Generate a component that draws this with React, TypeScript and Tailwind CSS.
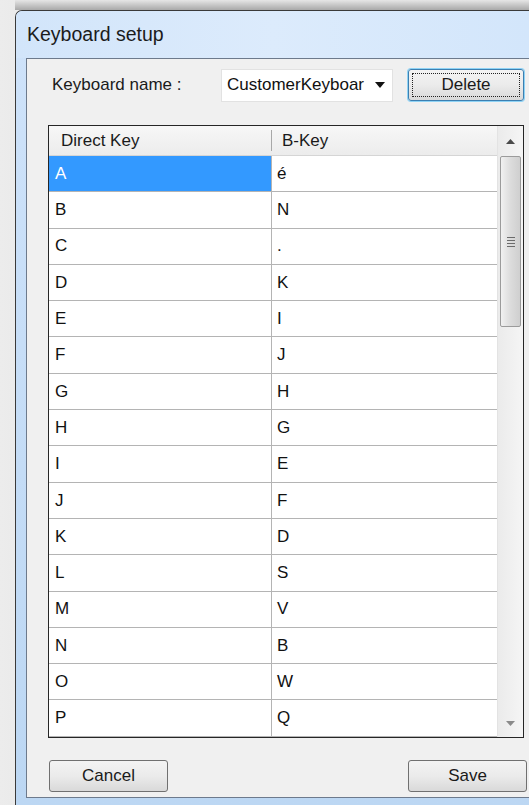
import React from "react";

const rows: [string, string][] = [
  ["A", "é"],
  ["B", "N"],
  ["C", "."],
  ["D", "K"],
  ["E", "I"],
  ["F", "J"],
  ["G", "H"],
  ["H", "G"],
  ["I", "E"],
  ["J", "F"],
  ["K", "D"],
  ["L", "S"],
  ["M", "V"],
  ["N", "B"],
  ["O", "W"],
  ["P", "Q"],
];

const ui = { fontFamily: '"Liberation Sans", Arial, sans-serif' };

function ScrollBar() {
  return (
    <div className="w-[26px] flex flex-col bg-gradient-to-r from-[#ebebeb] to-[#f5f5f5] border-l border-[#e3e3e3]">
      <div className="h-[30px] flex items-center justify-center">
        <svg width="9" height="5" viewBox="0 0 9 5">
          <path d="M0 5 L4.5 0 L9 5 Z" fill="#4a4a4a" />
        </svg>
      </div>
      <div className="mx-[2px] h-[171px] rounded-[2px] border border-[#9b9b9b] bg-gradient-to-r from-[#f1f1f1] via-[#dcdcdc] to-[#cfcfcf] flex items-center justify-center">
        <div className="flex flex-col gap-[2px]">
          <div className="w-[8px] h-[1px] bg-[#6b6b6b]" />
          <div className="w-[8px] h-[1px] bg-[#6b6b6b]" />
          <div className="w-[8px] h-[1px] bg-[#6b6b6b]" />
          <div className="w-[8px] h-[1px] bg-[#6b6b6b]" />
        </div>
      </div>
      <div className="flex-1" />
      <div className="h-[28px] flex items-center justify-center">
        <svg width="9" height="5" viewBox="0 0 9 5">
          <path d="M0 0 L4.5 5 L9 0 Z" fill="#8a8a8a" />
        </svg>
      </div>
    </div>
  );
}

function Button({ label, focused }: { label: string; focused?: boolean }) {
  return (
    <div
      className={
        "h-[32px] rounded-[3px] border flex items-center justify-center text-[17px] text-[#1a1a1a] bg-gradient-to-b from-[#f3f3f3] via-[#ebebeb] to-[#d9d9d9] " +
        (focused
          ? "border-[#3c7fb1] shadow-[0_0_0_1px_#8fd3f5]"
          : "border-[#707070]")
      }
    >
      {focused ? (
        <div className="m-[3px] self-stretch flex-1 border border-dotted border-[#222] flex items-center justify-center">
          {label}
        </div>
      ) : (
        label
      )}
    </div>
  );
}

export default function App() {
  return (
    <div
      className="w-[529px] h-[805px] overflow-hidden flex flex-col bg-gradient-to-r from-[#ececec] to-[#c4c4c4]"
      style={ui}
    >
      {/* shadow above the window */}
      <div className="h-[10px] bg-gradient-to-b from-[#e6e6e6] to-[#a9a9a9] ml-[15px]" />
      <div className="flex-1 flex pl-[15px] min-h-0">
        <div className="flex-1 flex flex-col rounded-tl-[7px] border-l border-t border-[#3a3a3a] bg-gradient-to-b from-[#cfe3fa] to-[#bcd7f3] overflow-hidden">
          {/* title bar */}
          <div className="h-[47px] flex items-center pl-[11px] text-[19.5px] text-[#1b1b1b] bg-gradient-to-r from-[#d2e5fa] via-[#dcebfc] to-[#d3e6fb]">
            Keyboard setup
          </div>
          {/* client area */}
          <div className="flex-1 ml-[10px] mb-[7px] border-l border-t border-b border-[#6d7a8c] bg-[#f0f0f0] flex flex-col">
            <div className="flex items-center pt-[9px] h-[43px]">
              <div className="pl-[25px] w-[194px] text-[17px] text-[#1a1a1a]">Keyboard name :</div>
              <div className="w-[172px] h-[33px] bg-white border border-[#e2e2e2] flex items-center pl-[5px] pr-[7px] text-[17px] text-[#111]">
                <span className="flex-1 overflow-hidden whitespace-nowrap">CustomerKeyboar</span>
                <svg width="10" height="6" viewBox="0 0 10 6" className="ml-[6px]">
                  <path d="M0 0 L10 0 L5 6 Z" fill="#111" />
                </svg>
              </div>
              <div className="ml-[15px] w-[116px]">
                <Button label="Delete" focused />
              </div>
            </div>

            {/* key grid */}
            <div className="ml-[21px] mt-[23px] w-[476px] h-[613px] border border-[#262626] bg-white flex">
              <div className="flex-1 flex flex-col">
                <div className="h-[30px] flex text-[17px] text-[#1a1a1a] bg-gradient-to-b from-[#f7f7f7] to-[#ececec] border-b border-[#d5d5d5]">
                  <div className="w-[223px] flex items-center pl-[12px] border-r border-[#a8a8a8] my-[4px]">Direct Key</div>
                  <div className="flex-1 flex items-center pl-[10px]">B-Key</div>
                </div>
                {rows.map(([a, b], i) => (
                  <div key={a} className="h-[36.3px] flex text-[17px] text-[#111] border-b border-[#b4b4b4]">
                    <div
                      className={
                        "w-[223px] flex items-center pl-[6px] border-r border-[#b4b4b4] " +
                        (i === 0 ? "bg-[#3399ff] text-white" : "")
                      }
                    >
                      {a}
                    </div>
                    <div className="flex-1 flex items-center pl-[5px]">{b}</div>
                  </div>
                ))}
              </div>
              <ScrollBar />
            </div>

            {/* bottom buttons */}
            <div className="flex justify-between mt-[22px] pl-[22px] pr-[2px]">
              <div className="w-[119px]">
                <Button label="Cancel" />
              </div>
              <div className="w-[119px]">
                <Button label="Save" />
              </div>
            </div>
          </div>
        </div>
      </div>
    </div>
  );
}
